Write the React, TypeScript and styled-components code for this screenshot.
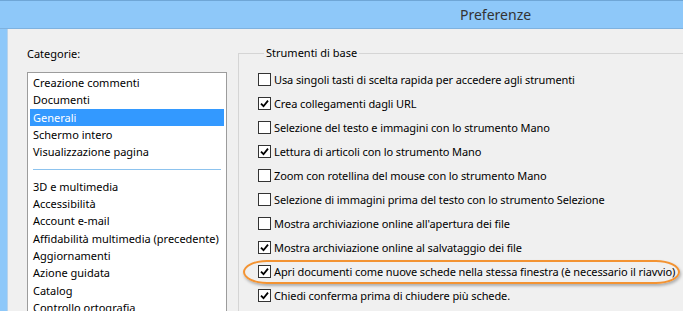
import styled, { createGlobalStyle } from 'styled-components';

const GlobalStyle = createGlobalStyle`
  html, body {
    margin: 0;
    padding: 0;
    overflow: hidden;
  }
  body {
    font-family: "Noto Sans", "Open Sans", sans-serif;
    font-size: 11px;
    color: #000;
  }
`;

const Window = styled.div`
  width: 683px;
  height: 311px;
  background: #8ec8f9;
  border-top: 1px solid #6fa6d6;
  box-sizing: border-box;
  display: flex;
  flex-direction: column;
  overflow: hidden;
`;

const TitleBar = styled.div`
  height: 27px;
  flex: none;
  display: flex;
  align-items: center;
  padding-left: 460px;
  font-size: 14px;
  color: #333;
  border-bottom: 1px solid #7fb2df;
`;

const Body = styled.div`
  flex: 1;
  margin-left: 7px;
  background: #f0f0f0;
  border-left: 1px solid #b9d3ea;
  display: flex;
  overflow: hidden;
`;

const LeftColumn = styled.div`
  width: 219px;
  flex: none;
  padding-left: 19px;
  padding-top: 17px;
  box-sizing: border-box;
`;

const Caption = styled.div`
  height: 16px;
  line-height: 16px;
  margin-bottom: 10px;
`;

const ListBox = styled.div`
  width: 200px;
  height: 260px;
  box-sizing: border-box;
  background: #fff;
  border: 1px solid #9c9c9c;
  padding: 1px 2px;
`;

const Item = styled.div<{ $selected?: boolean }>`
  height: 17.3px;
  line-height: 17.3px;
  padding-left: 3px;
  white-space: nowrap;
  background: ${({ $selected }) => ($selected ? '#3399ff' : 'transparent')};
  color: ${({ $selected }) => ($selected ? '#fff' : '#000')};
`;

const Separator = styled.div`
  height: 17.3px;
  display: flex;
  align-items: center;
  padding: 0 3px;

  &::after {
    content: '';
    flex: 1;
    height: 1px;
    background: #8dc3ee;
  }
`;

const RightColumn = styled.div`
  flex: 1;
  padding-left: 11px;
  padding-top: 16px;
`;

const GroupBox = styled.fieldset`
  margin: 0;
  padding: 6px 0 0 19px;
  border: 1px solid #d5d5d5;
  border-right: none;
  height: 300px;
  box-sizing: border-box;
`;

const Legend = styled.legend`
  padding: 0 2px;
  margin-left: 6px;
  line-height: 16px;
`;

const Row = styled.label`
  position: relative;
  display: flex;
  align-items: center;
  height: 24.1px;
  gap: 3px;
  white-space: nowrap;
  letter-spacing: -0.1px;
`;

const Box = styled.span`
  width: 13px;
  height: 13px;
  box-sizing: border-box;
  border: 1px solid #333;
  background: #fff;
  flex: none;
  display: flex;
  align-items: center;
  justify-content: center;
`;

const Highlight = styled.span`
  position: absolute;
  left: -15px;
  top: 0;
  width: 437px;
  height: 24px;
  box-sizing: border-box;
  border: 2px solid #f39332;
  border-radius: 24px / 12px;
  box-shadow: 1px 2px 3px rgba(0, 0, 0, 0.28);
  pointer-events: none;
`;

const Check = () => (
  <svg width="9" height="9" viewBox="0 0 9 9">
    <path d="M1 4.6 L3.5 7.2 L8 1.6" fill="none" stroke="#000" strokeWidth="1.8" />
  </svg>
);

const categoriesTop = ['Creazione commenti', 'Documenti', 'Generali', 'Schermo intero', 'Visualizzazione pagina'];
const categoriesBottom = [
  '3D e multimedia',
  'Accessibilità',
  'Account e-mail',
  'Affidabilità multimedia (precedente)',
  'Aggiornamenti',
  'Azione guidata',
  'Catalog',
  'Controllo ortografia',
];

const options = [
  { label: 'Usa singoli tasti di scelta rapida per accedere agli strumenti', checked: false },
  { label: 'Crea collegamenti dagli URL', checked: true },
  { label: 'Selezione del testo e immagini con lo strumento Mano', checked: false },
  { label: 'Lettura di articoli con lo strumento Mano', checked: true },
  { label: 'Zoom con rotellina del mouse con lo strumento Mano', checked: false },
  { label: 'Selezione di immagini prima del testo con lo strumento Selezione', checked: false },
  { label: "Mostra archiviazione online all'apertura dei file", checked: false },
  { label: 'Mostra archiviazione online al salvataggio dei file', checked: true },
  { label: 'Apri documenti come nuove schede nella stessa finestra (è necessario il riavvio)', checked: true, highlight: true },
  { label: 'Chiedi conferma prima di chiudere più schede.', checked: true },
];

export default function App() {
  return (
    <>
      <GlobalStyle />
      <Window>
        <TitleBar>Preferenze</TitleBar>
        <Body>
          <LeftColumn>
            <Caption>Categorie:</Caption>
            <ListBox>
              {categoriesTop.map((c) => (
                <Item key={c} $selected={c === 'Generali'}>
                  {c}
                </Item>
              ))}
              <Separator />
              {categoriesBottom.map((c) => (
                <Item key={c}>{c}</Item>
              ))}
            </ListBox>
          </LeftColumn>
          <RightColumn>
            <GroupBox>
              <Legend>Strumenti di base</Legend>
              {options.map((o) => (
                <Row key={o.label}>
                  <Box>{o.checked && <Check />}</Box>
                  {o.label}
                  {o.highlight && <Highlight />}
                </Row>
              ))}
            </GroupBox>
          </RightColumn>
        </Body>
      </Window>
    </>
  );
}
